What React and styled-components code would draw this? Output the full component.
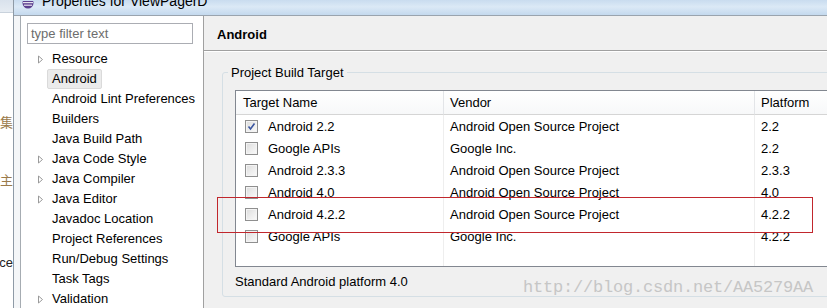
import React from 'react';
import styled, { createGlobalStyle } from 'styled-components';

const GlobalStyle = createGlobalStyle`
  html, body {
    margin: 0;
    padding: 0;
    background: #ffffff;
  }
  body {
    font-family: "Liberation Sans", "Noto Sans CJK SC", sans-serif;
    font-size: 13px;
    color: #000;
  }
`;

const treeItems = [
  { label: 'Resource', arrow: true },
  { label: 'Android', selected: true },
  { label: 'Android Lint Preferences' },
  { label: 'Builders' },
  { label: 'Java Build Path' },
  { label: 'Java Code Style', arrow: true },
  { label: 'Java Compiler', arrow: true },
  { label: 'Java Editor', arrow: true },
  { label: 'Javadoc Location' },
  { label: 'Project References' },
  { label: 'Run/Debug Settings' },
  { label: 'Task Tags' },
  { label: 'Validation', arrow: true },
];

const targets = [
  { name: 'Android 2.2', vendor: 'Android Open Source Project', platform: '2.2', checked: true },
  { name: 'Google APIs', vendor: 'Google Inc.', platform: '2.2' },
  { name: 'Android 2.3.3', vendor: 'Android Open Source Project', platform: '2.3.3' },
  { name: 'Android 4.0', vendor: 'Android Open Source Project', platform: '4.0' },
  { name: 'Android 4.2.2', vendor: 'Android Open Source Project', platform: '4.2.2' },
  { name: 'Google APIs', vendor: 'Google Inc.', platform: '4.2.2' },
];

const Screen = styled.div`
  position: relative;
  width: 827px;
  height: 308px;
  overflow: hidden;
  display: flex;
  background: #fff;
`;

const BackWindow = styled.div`
  width: 13px;
  flex-shrink: 0;
  display: flex;
  flex-direction: column;
  overflow: hidden;
  background: #fff;
`;

const BackTop = styled.div`
  height: 12px;
  background: linear-gradient(#d9e2ec, #e6ecf2);
  border-bottom: 1px solid #c9d2dc;
`;

const BackText = styled.div`
  display: flex;
  justify-content: flex-end;
  white-space: nowrap;
  height: 18px;
  line-height: 18px;
  margin-top: ${p => p.top}px;
  font-size: 13px;
  color: ${p => p.tan ? '#9a7a4a' : '#222'};
`;

const Dialog = styled.div`
  flex: 1;
  display: flex;
  flex-direction: column;
  border-left: 1px solid #8e9aa6;
  min-width: 0;
`;

const TitleBar = styled.div`
  height: 16px;
  flex-shrink: 0;
  display: flex;
  align-items: flex-end;
  overflow: hidden;
  background: linear-gradient(180deg, #c9dcef 0%, #dbe9f6 45%, #c4d9ee 100%);
  border-bottom: 1px solid #9aa4ae;
  box-sizing: border-box;
`;

const TitleIcon = styled.svg`
  margin-left: 8px;
  margin-bottom: 6px;
  flex-shrink: 0;
`;

const TitleText = styled.span`
  margin-left: 8px;
  font-size: 14px;
  line-height: 14px;
  margin-bottom: 7px;
  color: #000;
  white-space: nowrap;
`;

const Body = styled.div`
  flex: 1;
  display: flex;
  min-height: 0;
`;

const FrameStrip = styled.div`
  width: 6px;
  flex-shrink: 0;
  background: #f4f6f8;
  border-right: 1px solid #a6acb2;
`;

const LeftPanel = styled.div`
  width: 183px;
  flex-shrink: 0;
  background: #fff;
  border-right: 1px solid #a0a0a0;
  padding-top: 7px;
  box-sizing: border-box;
`;

const FilterBox = styled.div`
  margin-left: 6px;
  width: 166px;
  height: 21px;
  box-sizing: border-box;
  border: 1px solid #abadb3;
  color: #6d6d6d;
  font-size: 13px;
  line-height: 19px;
  padding-left: 3px;
`;

const Tree = styled.ul`
  list-style: none;
  margin: 5px 0 0 0;
  padding: 0;
`;

const TreeItem = styled.li`
  height: 20px;
  display: flex;
  align-items: center;
  padding-left: 16px;
  white-space: nowrap;
`;

const Arrow = styled.svg`
  width: 10px;
  flex-shrink: 0;
`;

const TreeLabel = styled.span`
  padding: 0 4px;
  height: 20px;
  box-sizing: border-box;
  border-radius: 2px;
  background: ${p => p.selected ? '#ebebeb' : 'transparent'};
  border: 1px solid ${p => p.selected ? '#dadada' : 'transparent'};
  line-height: 18px;
`;

const RightPanel = styled.div`
  flex: 1;
  background: #f0f0f0;
  display: flex;
  flex-direction: column;
  min-width: 0;
`;

const Header = styled.div`
  height: 35px;
  flex-shrink: 0;
  box-sizing: border-box;
  padding: 3px 0 0 13px;
  display: flex;
  align-items: center;
  font-weight: bold;
  font-size: 13px;
  border-bottom: 1px solid #a0a0a0;
  box-shadow: 0 1px 0 #ffffff;
`;

const Group = styled.fieldset`
  margin: 13px 0 0 18px;
  padding: 0 0 6px 12px;
  width: 640px;
  border: 1px solid #d5dfe5;
  border-radius: 3px;
  min-width: 0;
`;

const Legend = styled.legend`
  margin-left: -7px;
  padding: 0 3px;
  font-size: 13px;
  line-height: 17px;
`;

const TableBox = styled.div`
  margin-top: 9px;
  width: 620px;
  height: 177px;
  box-sizing: border-box;
  background: #fff;
  border: 1px solid #828790;
  display: grid;
  grid-template-columns: 208px 311px 1fr;
  grid-template-rows: 24px repeat(6, 22px) 1fr;
`;

const HeadCell = styled.div`
  background: linear-gradient(#ffffff, #f7f8f9);
  border-bottom: 1px solid #d5d5d5;
  border-right: 1px solid #e3e5e8;
  padding-left: ${p => p.pad}px;
  display: flex;
  align-items: center;
  white-space: nowrap;
`;

const Cell = styled.div`
  border-right: 1px solid #eeeeee;
  padding-left: ${p => p.pad}px;
  display: flex;
  align-items: center;
  white-space: nowrap;
`;

const Check = styled.span`
  width: 13px;
  height: 13px;
  box-sizing: border-box;
  border: 1px solid #8f8f8f;
  background: linear-gradient(135deg, #dcdcdc, #fbfbfb);
  box-shadow: inset 0 0 0 1px #f4f4f4;
  margin-right: 10px;
  display: flex;
  align-items: center;
  justify-content: center;
`;

const Description = styled.div`
  margin-top: 6px;
  font-size: 13px;
  line-height: 17px;
`;

const Watermark = styled.div`
  position: absolute;
  left: 523px;
  top: 278px;
  font-family: "Liberation Mono", monospace;
  font-size: 17px;
  color: #c6c6c6;
  white-space: nowrap;
  letter-spacing: -0.2px;
`;

const Highlight = styled.div`
  position: absolute;
  left: 217px;
  top: 197px;
  width: 596px;
  height: 36px;
  box-sizing: border-box;
  border: 1px solid #c1272d;
`;

const TreeArrow = () => (
  <Arrow height="9" viewBox="0 0 10 9">
    <path d="M1.5 1 L5.5 4.5 L1.5 8 Z" fill="#fff" stroke="#9a9a9a" strokeWidth="1" />
  </Arrow>
);

const CheckMark = () => (
  <svg width="9" height="9" viewBox="0 0 9 9">
    <path d="M1.5 4.5 L3.5 7 L7.5 1.5" fill="none" stroke="#3b56a0" strokeWidth="1.6" />
  </svg>
);

export default function App() {
  return (
    <>
      <GlobalStyle />
      <Screen>
        <BackWindow>
          <BackTop />
          <BackText tan top={101}>集</BackText>
          <BackText tan top={40}>主</BackText>
          <BackText top={64}>ce</BackText>
        </BackWindow>
        <Dialog>
          <TitleBar>
            <TitleIcon width="12" height="8" viewBox="0 0 12 8">
              <circle cx="6" cy="2" r="5.5" fill="#5b3f8f" />
              <rect x="1" y="1" width="10" height="1.2" fill="#fff" opacity="0.85" />
              <rect x="2" y="3.6" width="8" height="1.2" fill="#fff" opacity="0.85" />
            </TitleIcon>
            <TitleText>Properties for ViewPagerD</TitleText>
          </TitleBar>
          <Body>
            <FrameStrip />
            <LeftPanel>
              <FilterBox>type filter text</FilterBox>
              <Tree>
                {treeItems.map((item, i) => (
                  <TreeItem key={i}>
                    {item.arrow ? <TreeArrow /> : <Arrow height="9" />}
                    <TreeLabel selected={item.selected}>{item.label}</TreeLabel>
                  </TreeItem>
                ))}
              </Tree>
            </LeftPanel>
            <RightPanel>
              <Header>Android</Header>
              <Group>
                <Legend>Project Build Target</Legend>
                <TableBox>
                  <HeadCell pad={7}>Target Name</HeadCell>
                  <HeadCell pad={6}>Vendor</HeadCell>
                  <HeadCell pad={6}>Platform</HeadCell>
                  {targets.map((t, i) => (
                    <React.Fragment key={i}>
                      <Cell pad={9}>
                        <Check>{t.checked && <CheckMark />}</Check>
                        {t.name}
                      </Cell>
                      <Cell pad={6}>{t.vendor}</Cell>
                      <Cell pad={6}>{t.platform}</Cell>
                    </React.Fragment>
                  ))}
                  <Cell />
                  <Cell />
                  <Cell />
                </TableBox>
                <Description>Standard Android platform 4.0</Description>
              </Group>
            </RightPanel>
          </Body>
        </Dialog>
        <Highlight />
        <Watermark>http://blog.csdn.net/AA5279AA</Watermark>
      </Screen>
    </>
  );
}
